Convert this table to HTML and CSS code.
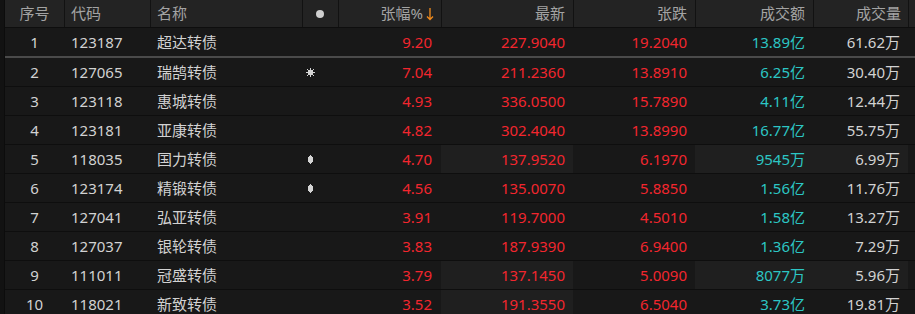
FILE: index.html
```html
<!DOCTYPE html>
<html lang="zh">
<head>
<meta charset="utf-8">
<link rel="stylesheet" href="styles.css">
</head>
<body>
<div class="table">
  <div class="row head">
    <div class="c c1">序号</div>
    <div class="c c2">代码</div>
    <div class="c c3">名称</div>
    <div class="c c4"><span class="dot"></span></div>
    <div class="c c5">张幅%<svg class="arrow" width="8" height="14" viewBox="0 0 8 14"><path d="M4 1V12.5M1 9.5L4 12.5L7 9.5" fill="none" stroke="#f08a1c" stroke-width="1.3"/></svg></div>
    <div class="c c6">最新</div>
    <div class="c c7">张跌</div>
    <div class="c c8">成交额</div>
    <div class="c c9">成交量</div>
    <div class="c c10"></div>
  </div>

  <div class="row first">
    <div class="c c1">1</div><div class="c c2">123187</div><div class="c c3">超达转债</div><div class="c c4"></div>
    <div class="c c5 red">9.20</div><div class="c c6 red">227.9040</div><div class="c c7 red">19.2040</div>
    <div class="c c8 teal">13.89亿</div><div class="c c9">61.62万</div><div class="c c10"></div>
  </div>
  <div class="row">
    <div class="c c1">2</div><div class="c c2">127065</div><div class="c c3">瑞鹄转债</div>
    <div class="c c4 icon"><svg width="9" height="9" viewBox="0 0 9 9"><rect x="2" y="2" width="5" height="5" fill="#d4d4d4"/><rect x="4" y="0" width="1" height="9" fill="#d4d4d4"/><rect x="0" y="4" width="9" height="1" fill="#d4d4d4"/><rect x="1" y="1" width="1" height="1" fill="#d4d4d4"/><rect x="7" y="1" width="1" height="1" fill="#d4d4d4"/><rect x="1" y="7" width="1" height="1" fill="#d4d4d4"/><rect x="7" y="7" width="1" height="1" fill="#d4d4d4"/></svg></div>
    <div class="c c5 red">7.04</div><div class="c c6 red">211.2360</div><div class="c c7 red">13.8910</div>
    <div class="c c8 teal">6.25亿</div><div class="c c9">30.40万</div><div class="c c10"></div>
  </div>
  <div class="row">
    <div class="c c1">3</div><div class="c c2">123118</div><div class="c c3">惠城转债</div><div class="c c4"></div>
    <div class="c c5 red">4.93</div><div class="c c6 red">336.0500</div><div class="c c7 red">15.7890</div>
    <div class="c c8 teal">4.11亿</div><div class="c c9">12.44万</div><div class="c c10"></div>
  </div>
  <div class="row">
    <div class="c c1">4</div><div class="c c2">123181</div><div class="c c3">亚康转债</div><div class="c c4"></div>
    <div class="c c5 red">4.82</div><div class="c c6 red">302.4040</div><div class="c c7 red">13.8990</div>
    <div class="c c8 teal">16.77亿</div><div class="c c9">55.75万</div><div class="c c10"></div>
  </div>
  <div class="row">
    <div class="c c1">5</div><div class="c c2">118035</div><div class="c c3">国力转债</div>
    <div class="c c4 icon"><svg width="5" height="9" viewBox="0 0 5 9"><path d="M2 0h1v1h1v1h1v5h-1v1h-1v1h-1v-1h-1v-1h-1v-5h1v-1h1z" fill="#d4d4d4"/></svg></div>
    <div class="c c5 red">4.70</div><div class="c c6 red hl">137.9520</div><div class="c c7 red">6.1970</div>
    <div class="c c8 teal hl">9545万</div><div class="c c9 hl">6.99万</div><div class="c c10"></div>
  </div>
  <div class="row">
    <div class="c c1">6</div><div class="c c2">123174</div><div class="c c3">精锻转债</div>
    <div class="c c4 icon"><svg width="5" height="9" viewBox="0 0 5 9"><path d="M2 0h1v1h1v1h1v5h-1v1h-1v1h-1v-1h-1v-1h-1v-5h1v-1h1z" fill="#d4d4d4"/></svg></div>
    <div class="c c5 red">4.56</div><div class="c c6 red">135.0070</div><div class="c c7 red">5.8850</div>
    <div class="c c8 teal">1.56亿</div><div class="c c9">11.76万</div><div class="c c10"></div>
  </div>
  <div class="row">
    <div class="c c1">7</div><div class="c c2">127041</div><div class="c c3">弘亚转债</div><div class="c c4"></div>
    <div class="c c5 red">3.91</div><div class="c c6 red">119.7000</div><div class="c c7 red">4.5010</div>
    <div class="c c8 teal">1.58亿</div><div class="c c9">13.27万</div><div class="c c10"></div>
  </div>
  <div class="row">
    <div class="c c1">8</div><div class="c c2">127037</div><div class="c c3">银轮转债</div><div class="c c4"></div>
    <div class="c c5 red">3.83</div><div class="c c6 red">187.9390</div><div class="c c7 red">6.9400</div>
    <div class="c c8 teal">1.36亿</div><div class="c c9">7.29万</div><div class="c c10"></div>
  </div>
  <div class="row">
    <div class="c c1">9</div><div class="c c2">111011</div><div class="c c3">冠盛转债</div><div class="c c4"></div>
    <div class="c c5 red">3.79</div><div class="c c6 red hl">137.1450</div><div class="c c7 red">5.0090</div>
    <div class="c c8 teal hl">8077万</div><div class="c c9 hl">5.96万</div><div class="c c10"></div>
  </div>
  <div class="row">
    <div class="c c1">10</div><div class="c c2">118021</div><div class="c c3">新致转债</div><div class="c c4"></div>
    <div class="c c5 red">3.52</div><div class="c c6 red hl">191.3550</div><div class="c c7 red">6.5040</div>
    <div class="c c8 teal">3.73亿</div><div class="c c9">19.81万</div><div class="c c10"></div>
  </div>
</div>
</body>
</html>
```
FILE: styles.css
```css
html, body {
  margin: 0;
  padding: 0;
  background: #181818;
  overflow: hidden;
}
body {
  font-family: "Noto Sans", "Noto Sans CJK SC", sans-serif;
  font-size: 15px;
  color: #d2d2d2;
}
.table {
  margin-left: 4px;
  border-left: 1px solid #0c0c0c;
  position: relative;
}
.table::before {
  content: "";
  position: absolute;
  left: -5px;
  top: 0;
  bottom: 0;
  width: 4px;
  background: #121212;
}
.row {
  display: grid;
  grid-template-columns: 59px 86px 152px 36px 103px 132px 122px 118px 95px 1fr;
  height: 28px;
  border-bottom: 1px solid #0e0e0e;
  background: #181818;
}
.row.first {
  border-bottom: 2px solid #4a4a4a;
}
.row.head {
  height: 27px;
  background: #232323;
  border-bottom: 1px solid #0e0e0e;
  color: #a3a3a3;
}
.c {
  display: flex;
  align-items: center;
  white-space: nowrap;
  line-height: 1;
}
.head .c + .c {
  border-left: 1px solid #121212;
}
.c1 { justify-content: center; }
.c2 { padding-left: 7px; }
.head .c2 { padding-left: 6px; }
.c3 { padding-left: 7px; }
.head .c3 { padding-left: 6px; }
.c4 { justify-content: center; padding-right: 2px; }
.c4.icon { padding-right: 19px; }
.c5, .c6, .c7, .c8, .c9 { justify-content: flex-end; padding-right: 8px; }
.c5 { padding-right: 9px; }
.head .c5 { padding-right: 7px; }
.head .c9 { padding-right: 7px; }
.arrow { margin-left: 3px; }
.dot {
  width: 8px;
  height: 8px;
  border-radius: 50%;
  background: #cfcfcf;
}
.red { color: #f2262e; }
.teal { color: #2cc6c4; }
.hl { background: #1f1f1f; }
```
